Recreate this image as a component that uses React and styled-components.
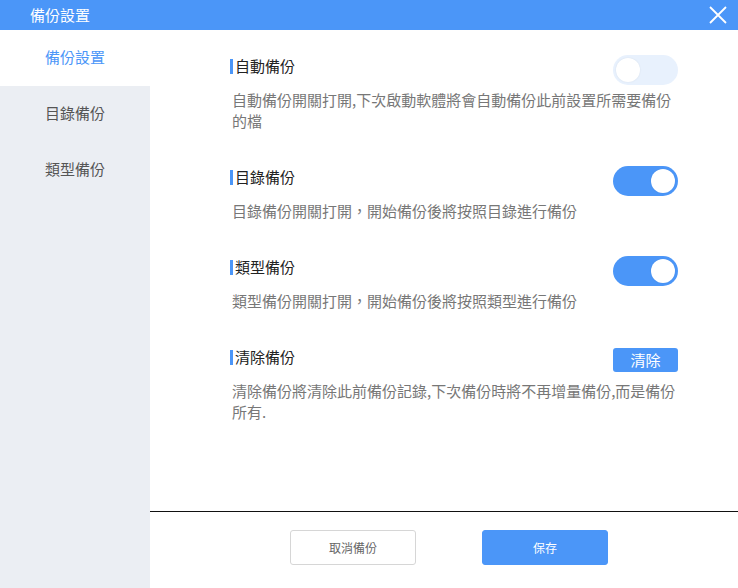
import React, { useState } from "react";
import styled, { createGlobalStyle } from "styled-components";

const GlobalStyle = createGlobalStyle`
  * { box-sizing: border-box; }
  html, body { margin: 0; padding: 0; background: #fff; }
  body {
    font-family: "Noto Sans CJK TC", "Noto Sans", "Liberation Sans", sans-serif;
  }
`;

const BLUE = "#4b96f8";

const Window = styled.div`
  width: 738px;
  height: 588px;
  display: flex;
  flex-direction: column;
  background: #fff;
  overflow: hidden;
`;

const TitleBar = styled.div`
  height: 30px;
  flex: none;
  background: ${BLUE};
  display: flex;
  align-items: center;
  justify-content: space-between;
  padding: 0 10px 1px 30px;
  color: #fff;
  font-size: 15px;
`;

const CloseButton = styled.button`
  border: none;
  background: none;
  padding: 0;
  width: 20px;
  height: 20px;
  display: flex;
  cursor: pointer;
`;

const Body = styled.div`
  flex: 1;
  display: flex;
  min-height: 0;
`;

const Sidebar = styled.nav`
  width: 150px;
  flex: none;
  background: #ebeef3;
  display: flex;
  flex-direction: column;
`;

const NavItem = styled.div`
  height: 56px;
  display: flex;
  align-items: center;
  justify-content: center;
  padding-bottom: 3px;
  font-size: 15px;
  color: ${(p) => (p.$active ? BLUE : "#555")};
  background: ${(p) => (p.$active ? "#fff" : "transparent")};
  cursor: pointer;
`;

const Main = styled.div`
  flex: 1;
  display: flex;
  flex-direction: column;
`;

const Content = styled.div`
  flex: 1;
  padding: 25px 60px 0 80px;
  display: flex;
  flex-direction: column;
  gap: 35px;
`;

const Section = styled.section`
  display: flex;
  flex-direction: column;
  gap: 4px;
`;

const Row = styled.div`
  height: 30px;
  display: flex;
  align-items: center;
  justify-content: space-between;
`;

const Title = styled.div`
  display: flex;
  align-items: center;
  gap: 2px;
  font-size: 15px;
  color: #222;
  margin-bottom: 10px;

  &::before {
    content: "";
    width: 3px;
    height: 15px;
    margin-top: 2px;
    background: ${BLUE};
  }
`;

const Desc = styled.p`
  margin: 0;
  padding-left: 2px;
  width: 448px;
  font-size: 15px;
  line-height: 21px;
  color: #777;
`;

const Switch = styled.button`
  width: 65px;
  height: 30px;
  border: none;
  padding: 0;
  border-radius: 15px;
  background: ${(p) => (p.$on ? BLUE : "#e8f1fd")};
  position: relative;
  cursor: pointer;

  &::after {
    content: "";
    position: absolute;
    top: 3px;
    left: ${(p) => (p.$on ? "38px" : "3px")};
    width: 24px;
    height: 24px;
    border-radius: 50%;
    background: #fff;
    box-shadow: 0 0 2px rgba(0, 0, 0, 0.08);
  }
`;

const SmallButton = styled.button`
  width: 65px;
  height: 24px;
  border: none;
  border-radius: 3px;
  background: ${BLUE};
  color: #fff;
  font-family: inherit;
  font-size: 15px;
  padding: 0 0 2px;
  margin-bottom: 2px;
  cursor: pointer;
`;

const Footer = styled.div`
  height: 77px;
  flex: none;
  border-top: 1px solid #111;
  display: flex;
  justify-content: center;
  align-items: flex-start;
  gap: 66px;
  padding: 18px 0 0 10px;
`;

const FooterButton = styled.button`
  width: 126px;
  height: 35px;
  border-radius: 3px;
  font-family: inherit;
  font-size: 12px;
  cursor: pointer;
  border: 1px solid ${(p) => (p.$primary ? BLUE : "#d6d6d6")};
  background: ${(p) => (p.$primary ? BLUE : "#fff")};
  color: ${(p) => (p.$primary ? "#fff" : "#666")};
`;

const sections = [
  {
    key: "auto",
    title: "自動備份",
    desc: "自動備份開關打開,下次啟動軟體將會自動備份此前設置所需要備份的檔",
    on: false,
  },
  {
    key: "dir",
    title: "目錄備份",
    desc: "目錄備份開關打開，開始備份後將按照目錄進行備份",
    on: true,
  },
  {
    key: "type",
    title: "類型備份",
    desc: "類型備份開關打開，開始備份後將按照類型進行備份",
    on: true,
  },
];

export default function App() {
  const [toggles, setToggles] = useState(
    Object.fromEntries(sections.map((s) => [s.key, s.on]))
  );

  return (
    <Window>
      <GlobalStyle />
      <TitleBar>
        <span>備份設置</span>
        <CloseButton aria-label="關閉">
          <svg width="20" height="20" viewBox="0 0 20 20">
            <path d="M2 2 L18 18 M18 2 L2 18" stroke="#fff" strokeWidth="1.8" fill="none" />
          </svg>
        </CloseButton>
      </TitleBar>
      <Body>
        <Sidebar>
          <NavItem $active>備份設置</NavItem>
          <NavItem>目錄備份</NavItem>
          <NavItem>類型備份</NavItem>
        </Sidebar>
        <Main>
          <Content>
            {sections.map((s) => (
              <Section key={s.key}>
                <Row>
                  <Title>{s.title}</Title>
                  <Switch
                    $on={toggles[s.key]}
                    onClick={() =>
                      setToggles((t) => ({ ...t, [s.key]: !t[s.key] }))
                    }
                  />
                </Row>
                <Desc>{s.desc}</Desc>
              </Section>
            ))}
            <Section>
              <Row>
                <Title>清除備份</Title>
                <SmallButton>清除</SmallButton>
              </Row>
              <Desc>清除備份將清除此前備份記錄,下次備份時將不再增量備份,而是備份所有.</Desc>
            </Section>
          </Content>
          <Footer>
            <FooterButton>取消備份</FooterButton>
            <FooterButton $primary>保存</FooterButton>
          </Footer>
        </Main>
      </Body>
    </Window>
  );
}
